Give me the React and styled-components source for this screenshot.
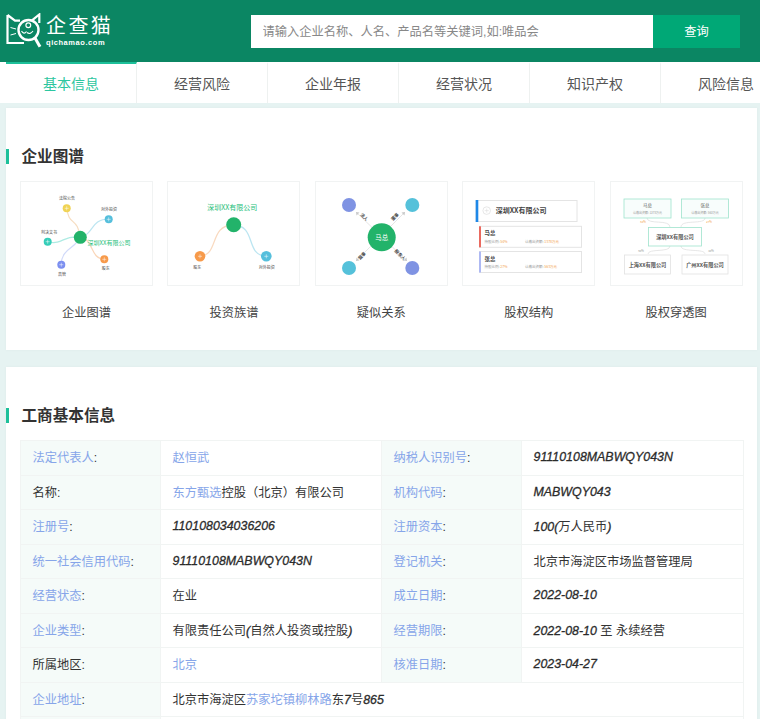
import React from 'react'
import styled, { createGlobalStyle } from 'styled-components'

const GlobalStyle = createGlobalStyle`
  html, body {
    margin: 0;
    height: 719px;
    overflow: hidden;
    background: #e6f3f2;
    font-family: "Liberation Sans", "Noto Sans CJK SC", sans-serif;
    color: #333;
  }
`

const Header = styled.header`
  height: 62px;
  background: #0b8663;
  display: flex;
  align-items: center;
  padding-left: 6px;
  box-sizing: border-box;
`

const Logo = styled.div`
  display: flex;
  align-items: center;
  gap: 2px;
  width: 245px;
  color: #fff;
`

const LogoText = styled.div`
  display: flex;
  flex-direction: column;
  width: 66px;
  padding-top: 1px;
`

const LogoName = styled.span`
  font-size: 20px;
  line-height: 23px;
  letter-spacing: 2.4px;
  white-space: nowrap;
`

const LogoDomain = styled.span`
  font-size: 7.5px;
  line-height: 10px;
  font-weight: 700;
  letter-spacing: 0.55px;
`

const SearchForm = styled.form`
  display: flex;
  height: 33px;
  width: 489px;
  margin: 0;
`

const SearchInput = styled.input`
  flex: 1;
  min-width: 0;
  border: 0;
  outline: 0;
  padding: 1px 11.5px 0;
  font: inherit;
  font-size: 12.25px;
  background: #fff;
  &::placeholder {
    color: #888;
    opacity: 1;
  }
`

const SearchButton = styled.button`
  width: 87px;
  border: 0;
  background: #00a876;
  color: #fff;
  font: inherit;
  font-size: 12.25px;
  padding-bottom: 1px;
`

const Tabs = styled.nav`
  display: flex;
  height: 41px;
  background: #fff;
  padding-left: 6px;
  overflow: hidden;
`

const Tab = styled.div`
  flex: 0 0 131px;
  box-sizing: border-box;
  display: flex;
  align-items: center;
  justify-content: center;
  font-size: 14px;
  color: ${p => (p.$active ? '#2cc6a0' : '#555')};
  border-right: 1px solid #eef1f0;
  border-top: 2px solid ${p => (p.$active ? '#1dc09a' : 'transparent')};
  padding-bottom: 2px;
`

const Main = styled.main`
  display: flex;
  flex-direction: column;
  gap: 17px;
  padding: 5px 3px 0 6px;
`

const Card = styled.section`
  background: #fff;
  padding: 0 14px;
  box-shadow: 0 0 3px rgba(0, 60, 50, 0.04);
`

const GraphCard = styled(Card)`
  height: 242px;
  box-sizing: border-box;
`

const Title = styled.h2`
  position: relative;
  margin: 0;
  height: 22px;
  padding: 38px 0 13px 1.5px;
  font-size: 15.6px;
  line-height: 22px;
  font-weight: 700;
  color: #333;
  &::before {
    content: '';
    position: absolute;
    left: -14px;
    top: 41px;
    width: 3px;
    height: 15px;
    background: #1dc09a;
  }
`

const Thumbs = styled.div`
  display: grid;
  grid-template-columns: repeat(5, 133px);
  column-gap: 14.4px;
`

const Thumb = styled.figure`
  margin: 0;
  display: flex;
  flex-direction: column;
`

const ThumbFrame = styled.div`
  height: 105px;
  box-sizing: border-box;
  border: 1px solid #f1f3f3;
  svg {
    display: block;
    margin: -1px;
    overflow: visible;
  }
`

const ThumbLabel = styled.figcaption`
  margin-top: 18px;
  text-align: center;
  font-size: 12.25px;
  line-height: 18px;
  color: #444;
`

const InfoTable = styled.table`
  width: 723px;
  border-collapse: collapse;
  table-layout: fixed;
  font-size: 12.25px;
  color: #333;
`

const Row = styled.tr`
  height: 34.5px;
`

const Key = styled.th`
  width: 140px;
  box-sizing: border-box;
  padding: 0 11.5px 1px;
  text-align: left;
  font-weight: 400;
  background: #f5fbf9;
  border: 1.5px solid #f1f4f3;
`

const Val = styled.td`
  padding: 0 11.5px 1px;
  border: 1.5px solid #f1f4f3;
`

const Blue = styled.span`
  color: #86a5e9;
`

const Latin = styled.span`
  font-size: 12.4px;
  font-style: italic;
  color: #2b2b2b;
  -webkit-text-stroke: 0.3px #2b2b2b;
`

const CatLogo = () => (
  <svg width="38" height="36" viewBox="0 0 38 36" fill="none" stroke="#fff" strokeWidth="2.2">
    <path d="M1.5 2 L9 7.7 H14 M33.3 10 V1.5 L25.7 7.7 M1.5 2 V30 H18" />
    <circle cx="22.5" cy="17" r="10" strokeWidth="2.4" />
    <path d="M29 25 L34 33.7" strokeWidth="3" />
    <circle cx="22.3" cy="12.3" r="2.4" strokeWidth="1.2" />
    <path d="M15.5 18 q2.5 4 5 0.5 M21 19.5 q3 2.5 6 -1.5" strokeWidth="1.1" />
    <path d="M4.5 14.5 l5.5 1.5 M4.5 22 l5.5 -1.5" strokeWidth="1" />
  </svg>
)

const Frame = ({ children }) => (
  <ThumbFrame>
    <svg width="133" height="105" viewBox="0 0 133 105" fontFamily='"Noto Sans CJK SC", sans-serif'>
      {children}
    </svg>
  </ThumbFrame>
)

const Node = ({ x, y, r = 4, c }) => (
  <g>
    <circle cx={x} cy={y} r={r} fill={c} />
    <path d={`M${x - 2} ${y} H${x + 2} M${x} ${y - 2} V${y + 2}`} stroke="#fff" strokeOpacity="0.7" strokeWidth="0.7" />
  </g>
)

const Small = ({ x, y, children }) => (
  <text x={x} y={y} fontSize="4" fill="#444" textAnchor="middle">{children}</text>
)

const MapThumb = () => (
  <Frame>
    <g fill="none" strokeWidth="1.2" strokeOpacity="0.4">
      <path d="M47 27 C48 45 58 36 60 56" stroke="#e8a75e" />
      <path d="M60 56 C74 54 70 38 89 38" stroke="#56bfdc" />
      <path d="M60 56 C74 58 70 78 84 78" stroke="#f2974c" />
      <path d="M60 56 C56 68 42 66 41 84" stroke="#8aa0f0" />
      <path d="M28 61 C44 64 42 54 60 56" stroke="#35cdb8" />
    </g>
    <Node x={46.7} y={27.3} c="#f0d354" />
    <Node x={88.7} y={38.3} c="#56bfdc" />
    <Node x={27.7} y={60.7} c="#35cdb8" />
    <Node x={84.3} y={78.3} c="#f79a4a" />
    <Node x={41.3} y={83.7} c="#7c8ff0" />
    <circle cx="60.3" cy="56.3" r="6.5" fill="#22b36a" />
    <Small x={47} y={19}>法院公告</Small>
    <Small x={89} y={29.5}>对外投资</Small>
    <Small x={29} y={52.5}>判决文书</Small>
    <Small x={85.7} y={89}>股东</Small>
    <Small x={42} y={94.5}>高管</Small>
    <text x="89" y="64" fontSize="6" fill="#27c07a" textAnchor="middle">深圳XX有限公司</text>
  </Frame>
)

const InvestThumb = () => (
  <Frame>
    <g fill="none" strokeWidth="1.3" strokeOpacity="0.4">
      <path d="M33 75 C52 75 42 44 66 44" stroke="#f0a060" />
      <path d="M66 44 C90 44 78 75 99 75" stroke="#56bfdc" />
    </g>
    <text x="65.3" y="29" fontSize="7" fill="#27c07a" textAnchor="middle">深圳XX有限公司</text>
    <circle cx="66.7" cy="43.7" r="7.5" fill="#22b36a" />
    <Node x={33} y={75.3} r={5.3} c="#f79a4a" />
    <Node x={99.3} y={75.3} r={5.3} c="#56bfdc" />
    <Small x={30.3} y={87.5}>股东</Small>
    <Small x={99.7} y={87.5}>对外投资</Small>
  </Frame>
)

const Spoke = ({ x, y, angle, label }) => (
  <text
    x={x}
    y={y}
    fontSize="4.4"
    fontWeight="700"
    fill="#444"
    textAnchor="middle"
    transform={`rotate(${angle} ${x} ${y})`}
  >
    {label}
  </text>
)

const RelationThumb = () => (
  <Frame>
    <path d="M41 31 L92 80 M90 31 L41 80" stroke="#dedede" strokeWidth="0.8" />
    <path d="M41 31 l3.5 0.5 l-3 3 Z M90 31 l-3.5 0.5 l3 3 Z M41 80 l3.5 -0.5 l-3 -3 Z M92 80 l-3.5 -0.5 l3 -3 Z" fill="#c9c9c9" />
    <circle cx="34" cy="24" r="7" fill="#7f93e3" />
    <circle cx="97.3" cy="24" r="7" fill="#55c1da" />
    <circle cx="34" cy="87" r="7" fill="#55c1da" />
    <circle cx="97.3" cy="87" r="7" fill="#7f93e3" />
    <circle cx="66.7" cy="56.3" r="14" fill="#22b36a" />
    <text x="66.7" y="59" fontSize="6.5" fill="#fff" textAnchor="middle">马总</text>
    <Spoke x={48} y={37} angle={45} label="法人" />
    <Spoke x={81} y={37} angle={-45} label="董事" />
    <Spoke x={48} y={76} angle={-45} label="监事" />
    <Spoke x={84} y={75} angle={45} label="股东人" />
  </Frame>
)

const Holder = ({ y, c, name, rate, amount }) => (
  <g>
    <rect x="17.5" y={y} width="102" height="21" fill="#fff" stroke="#e4e4e4" />
    <rect x="17" y={y} width="2" height="21" fill={c} />
    <text x="22.5" y={y + 9} fontSize="5.4" fontWeight="700" fill="#444">{name}</text>
    <text x="22.5" y={y + 16.5} fontSize="3.5" fill="#999">持股比例: <tspan fill="#f2a24c">{rate}</tspan></text>
    <text x="63" y={y + 16.5} fontSize="3.5" fill="#999">认缴出资额: <tspan fill="#f2a24c">{amount}</tspan></text>
  </g>
)

const EquityThumb = () => (
  <Frame>
    <rect x="14" y="19.5" width="101" height="21" fill="#fff" stroke="#e4e4e4" />
    <rect x="13.7" y="19" width="2.6" height="22" fill="#1e88e8" />
    <circle cx="24.7" cy="29.6" r="3.8" fill="none" stroke="#ddd" strokeWidth="0.7" />
    <path d="M22.7 29.6 H26.7 M24.7 27.6 V31.6" stroke="#ddd" strokeWidth="0.6" />
    <text x="33.7" y="32.2" fontSize="7" fontWeight="700" fill="#444">深圳XX有限公司</text>
    <Holder y={45.3} c="#ea6a60" name="马总" rate="54%" amount="1378万元" />
    <Holder y={70.5} c="#aeb9f3" name="张总" rate="27%" amount="563万元" />
  </Frame>
)

const Box = ({ x, y, w, h, c, bg = '#fff', label, note }) => (
  <g>
    <rect x={x} y={y} width={w} height={h} fill={bg} stroke={c} strokeWidth="0.8" />
    <text x={x + w / 2} y={note ? y + 8 : y + h / 2 + 2} fontSize={note ? 4.5 : 5.2} fontWeight={note ? 400 : 700} fill="#555" textAnchor="middle">
      {label}
    </text>
    {note && (
      <text x={x + w / 2} y={y + 14.5} fontSize="3" fill="#999" textAnchor="middle">{note}</text>
    )}
  </g>
)

const PierceThumb = () => (
  <Frame>
    <g fill="none" stroke="#dcdcdc" strokeWidth="0.7">
      <path d="M37 37 C37 44 60 38 60 46" />
      <path d="M95 37 C95 44 71 38 71 46" />
      <path d="M60 65 C60 72 38 67 38 73" />
      <path d="M71 65 C71 72 95 67 95 73" />
    </g>
    <g fontSize="2.8" textAnchor="middle">
      <text x="33" y="42" fill="#f2a24c">54%</text>
      <text x="99" y="42" fill="#f2a24c">27%</text>
      <text x="31" y="71" fill="#999">60%</text>
      <text x="101" y="71" fill="#999">40%</text>
    </g>
    <Box x={14} y={18} w={47} h={19} c="#9fe3cd" bg="#f8fdfc" label="马总" note="认缴出资额: 1378万元" />
    <Box x={71.5} y={18} w={47} h={19} c="#9fe3cd" bg="#f8fdfc" label="张总" note="认缴出资额: 563万元" />
    <Box x={38.5} y={46.5} w={53} h={18.5} c="#9fe3cd" label="深圳XX有限公司" />
    <Box x={14.5} y={74} w={46} h={19} c="#e2e2e2" label="上海XX有限公司" />
    <Box x={72} y={74} w={46} h={19} c="#e2e2e2" label="广州XX有限公司" />
  </Frame>
)

const tabs = ['基本信息', '经营风险', '企业年报', '经营状况', '知识产权', '风险信息']

const thumbs = [
  { label: '企业图谱', Drawing: MapThumb },
  { label: '投资族谱', Drawing: InvestThumb },
  { label: '疑似关系', Drawing: RelationThumb },
  { label: '股权结构', Drawing: EquityThumb },
  { label: '股权穿透图', Drawing: PierceThumb }
]

const Label = ({ plain, children }) => (
  <Key>{plain ? children : <Blue>{children}</Blue>}:</Key>
)

export default function App () {
  return (
    <>
      <GlobalStyle />
      <Header>
        <Logo>
          <CatLogo />
          <LogoText>
            <LogoName>企查猫</LogoName>
            <LogoDomain>qichamao.com</LogoDomain>
          </LogoText>
        </Logo>
        <SearchForm onSubmit={e => e.preventDefault()}>
          <SearchInput placeholder='请输入企业名称、人名、产品名等关键词,如:唯品会' />
          <SearchButton>查询</SearchButton>
        </SearchForm>
      </Header>
      <Tabs>
        {tabs.map((t, i) => (
          <Tab key={t} $active={i === 0}>{t}</Tab>
        ))}
      </Tabs>
      <Main>
        <GraphCard>
          <Title>企业图谱</Title>
          <Thumbs>
            {thumbs.map(({ label, Drawing }) => (
              <Thumb key={label}>
                <Drawing />
                <ThumbLabel>{label}</ThumbLabel>
              </Thumb>
            ))}
          </Thumbs>
        </GraphCard>
        <Card>
          <Title>工商基本信息</Title>
          <InfoTable>
            <colgroup>
              <col width='140' />
              <col width='221' />
              <col width='140' />
              <col width='222' />
            </colgroup>
            <tbody>
              <Row>
                <Label>法定代表人</Label>
                <Val><Blue>赵恒武</Blue></Val>
                <Label>纳税人识别号</Label>
                <Val><Latin>91110108MABWQY043N</Latin></Val>
              </Row>
              <Row>
                <Label plain>名称</Label>
                <Val><Blue>东方甄选</Blue>控股（北京）有限公司</Val>
                <Label>机构代码</Label>
                <Val><Latin>MABWQY043</Latin></Val>
              </Row>
              <Row>
                <Label>注册号</Label>
                <Val><Latin>110108034036206</Latin></Val>
                <Label>注册资本</Label>
                <Val><Latin>100(</Latin>万人民币<Latin>)</Latin></Val>
              </Row>
              <Row>
                <Label>统一社会信用代码</Label>
                <Val><Latin>91110108MABWQY043N</Latin></Val>
                <Label>登记机关</Label>
                <Val>北京市海淀区市场监督管理局</Val>
              </Row>
              <Row>
                <Label>经营状态</Label>
                <Val>在业</Val>
                <Label>成立日期</Label>
                <Val><Latin>2022-08-10</Latin></Val>
              </Row>
              <Row>
                <Label>企业类型</Label>
                <Val>有限责任公司<Latin>(</Latin>自然人投资或控股<Latin>)</Latin></Val>
                <Label>经营期限</Label>
                <Val><Latin>2022-08-10</Latin> 至 永续经营</Val>
              </Row>
              <Row>
                <Label plain>所属地区</Label>
                <Val><Blue>北京</Blue></Val>
                <Label>核准日期</Label>
                <Val><Latin>2023-04-27</Latin></Val>
              </Row>
              <Row>
                <Label>企业地址</Label>
                <Val colSpan={3}>北京市海淀区<Blue>苏家坨镇柳林路</Blue>东<Latin>7</Latin>号<Latin>865</Latin></Val>
              </Row>
              <Row>
                <Key />
                <Val colSpan={3} />
              </Row>
            </tbody>
          </InfoTable>
        </Card>
      </Main>
    </>
  )
}
